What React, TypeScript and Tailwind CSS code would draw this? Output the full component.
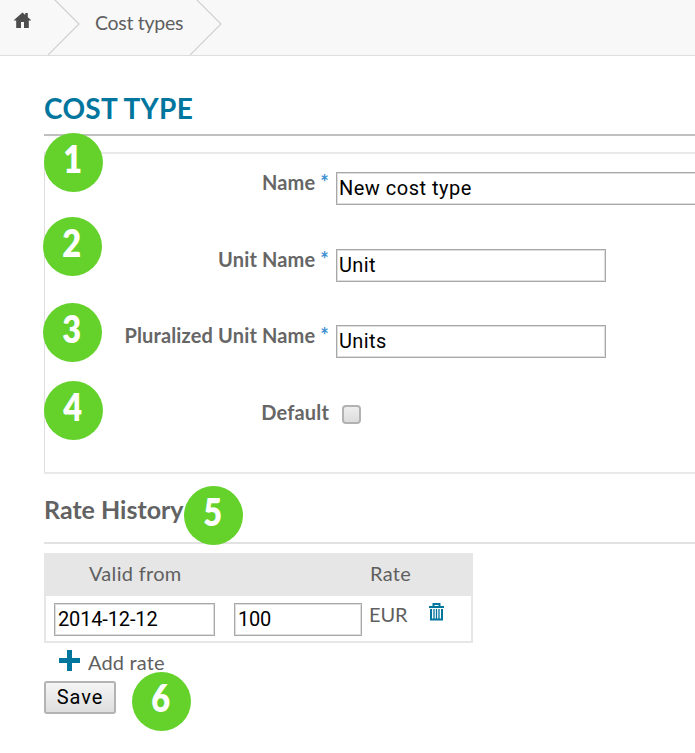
import type { ReactNode } from "react";

const badges = [
  { n: 1, x: 44, y: 133 },
  { n: 2, x: 43, y: 217 },
  { n: 3, x: 43, y: 303 },
  { n: 4, x: 44, y: 381 },
  { n: 5, x: 184, y: 486 },
  { n: 6, x: 132, y: 672 },
];

const inputText = "font-['Roboto',sans-serif] text-[20px] text-black";
const field = "h-[33px] border-[1.5px] border-[#a8a8a8] outline outline-[#dedede] -outline-offset-2 leading-[31px]";

function Chevron() {
  return (
    <svg className="h-[55px] w-8 shrink-0" viewBox="0 0 32 55" fill="none">
      <path d="M6 -1L31 24L0 55" stroke="#d0d0d0" strokeWidth="1.2" />
    </svg>
  );
}

function Row({ label, required, children }: { label: string; required?: boolean; children: ReactNode }) {
  return (
    <div className="flex h-[76.5px] items-start">
      <div className="-mt-[2px] flex w-[284px] shrink-0 justify-end gap-[5px] text-[20px] leading-6 font-bold tracking-[0.15px] text-[#666]">
        <span>{label}</span>
        {required && <span className="text-[#3d8fd1]">*</span>}
      </div>
      {children}
    </div>
  );
}

export default function App() {
  return (
    <div className="relative h-[753px] w-[695px] overflow-hidden bg-white font-['Lato',sans-serif] text-[#5f5f5f]">
      <header className="flex h-14 border-b border-[#dedede] bg-[#f8f8f8]">
        <div className="w-12 pt-3 pl-[14px]">
          <svg className="h-[17px] w-[17px]" viewBox="0 0 17 17" fill="#4d4d4d">
            <path d="M0 8L8.5 .5L11.2 3V1H13.8V5.3L17 8V8.5H14.8V16H10V10H7V16H2.2V8.5H0Z" />
          </svg>
        </div>
        <Chevron />
        <span className="w-[110px] pt-[11px] pl-[15px] text-[19.5px] leading-6 tracking-[-0.3px]">Cost types</span>
        <Chevron />
      </header>
      <main className="pl-11">
        <h1 className="h-[80px] border-b-2 border-[#c0c0c0] pt-[36px] text-[28px] leading-8 font-bold tracking-[0.3px] text-[#00759d]">COST TYPE</h1>
        <section className="mt-4 h-[322px] border-y-2 border-l border-y-[#e9e9e9] border-l-[#dedede] pt-[18px]">
          <Row label="Name" required>
            <div className={`ml-[7px] w-[400px] shrink-0 pl-[2px] tracking-[0.5px] ${field} ${inputText}`}>New cost type</div>
          </Row>
          <Row label="Unit Name" required>
            <div className={`ml-[7px] w-[270px] pl-[2px] tracking-[0.4px] ${field} ${inputText}`}>Unit</div>
          </Row>
          <Row label="Pluralized Unit Name" required>
            <div className={`ml-[7px] w-[270px] pl-[2px] tracking-[0.4px] ${field} ${inputText}`}>Units</div>
          </Row>
          <Row label="Default">
            <div className="mt-[3px] ml-[13px] h-[19px] w-[19px] rounded-[4px] border-2 border-[#b2b2b2] bg-linear-to-b from-[#eee] to-[#dcdcdc]" />
          </Row>
        </section>
        <h2 className="h-[70px] border-b-2 border-[#e2e2e2] pt-[19px] text-[25px] leading-8 font-bold text-[#626262]">Rate History</h2>
        <div className="mt-[9px] w-[429px] border-2 border-[#e6e6e6]">
          <div className="flex h-[41px] bg-[#e6e6e6] pt-[6px] text-[20px] leading-6">
            <span className="w-[281px] pl-[43px] tracking-[0.3px]">Valid from</span>
            <span className="pl-[43px] tracking-[0.3px]">Rate</span>
          </div>
          <div className="flex h-[45px] pt-[7px] pl-2">
            <div className={`w-[161px] pl-[3px] tracking-[-0.15px] ${field} ${inputText}`}>2014-12-12</div>
            <div className={`ml-[19px] w-[128px] pl-[3px] tracking-[-0.3px] ${field} ${inputText}`}>100</div>
            <span className="-mt-px ml-px w-[66px] pl-[6px] text-[20px] leading-6 tracking-[-0.1px]">EUR</span>
            <svg className="h-[18px] w-[15px]" viewBox="0 0 15 18" fill="none" stroke="#00759d">
              <path d="M0 4H15M4.5 3V1H10.5V3" strokeWidth="2" />
              <path d="M2 6V16.5H13V6" strokeWidth="2" />
              <path d="M5 6V16M7.5 6V16M10 6V16" strokeWidth="1.3" />
            </svg>
          </div>
        </div>
        <div className="flex h-[38px] pt-[7px] pl-[15px]">
          <svg className="h-[21px] w-[21px]" viewBox="0 0 21 21" stroke="#00759d" strokeWidth="5">
            <path d="M0 10.5H21M10.5 0V21" />
          </svg>
          <span className="pl-2 text-[20px] leading-6 tracking-[0.15px]">Add rate</span>
        </div>
        <button className={`block h-[33px] w-[72px] rounded-[3px] border-2 border-[#b3b3b3] bg-linear-to-b from-[#f5f5f5] to-[#dedede] leading-[29px] tracking-[0.9px] ${inputText}`}>Save</button>
      </main>
      {badges.map((b) => (
        <div
          key={b.n}
          className="absolute flex h-[59px] w-[59px] items-center justify-center rounded-full bg-[#64d22b] pr-[2px] pb-[9px] text-[37px] leading-none font-extrabold text-white"
          style={{ left: b.x, top: b.y }}
        >
          <span className="scale-x-[0.88]">{b.n}</span>
        </div>
      ))}
    </div>
  );
}
